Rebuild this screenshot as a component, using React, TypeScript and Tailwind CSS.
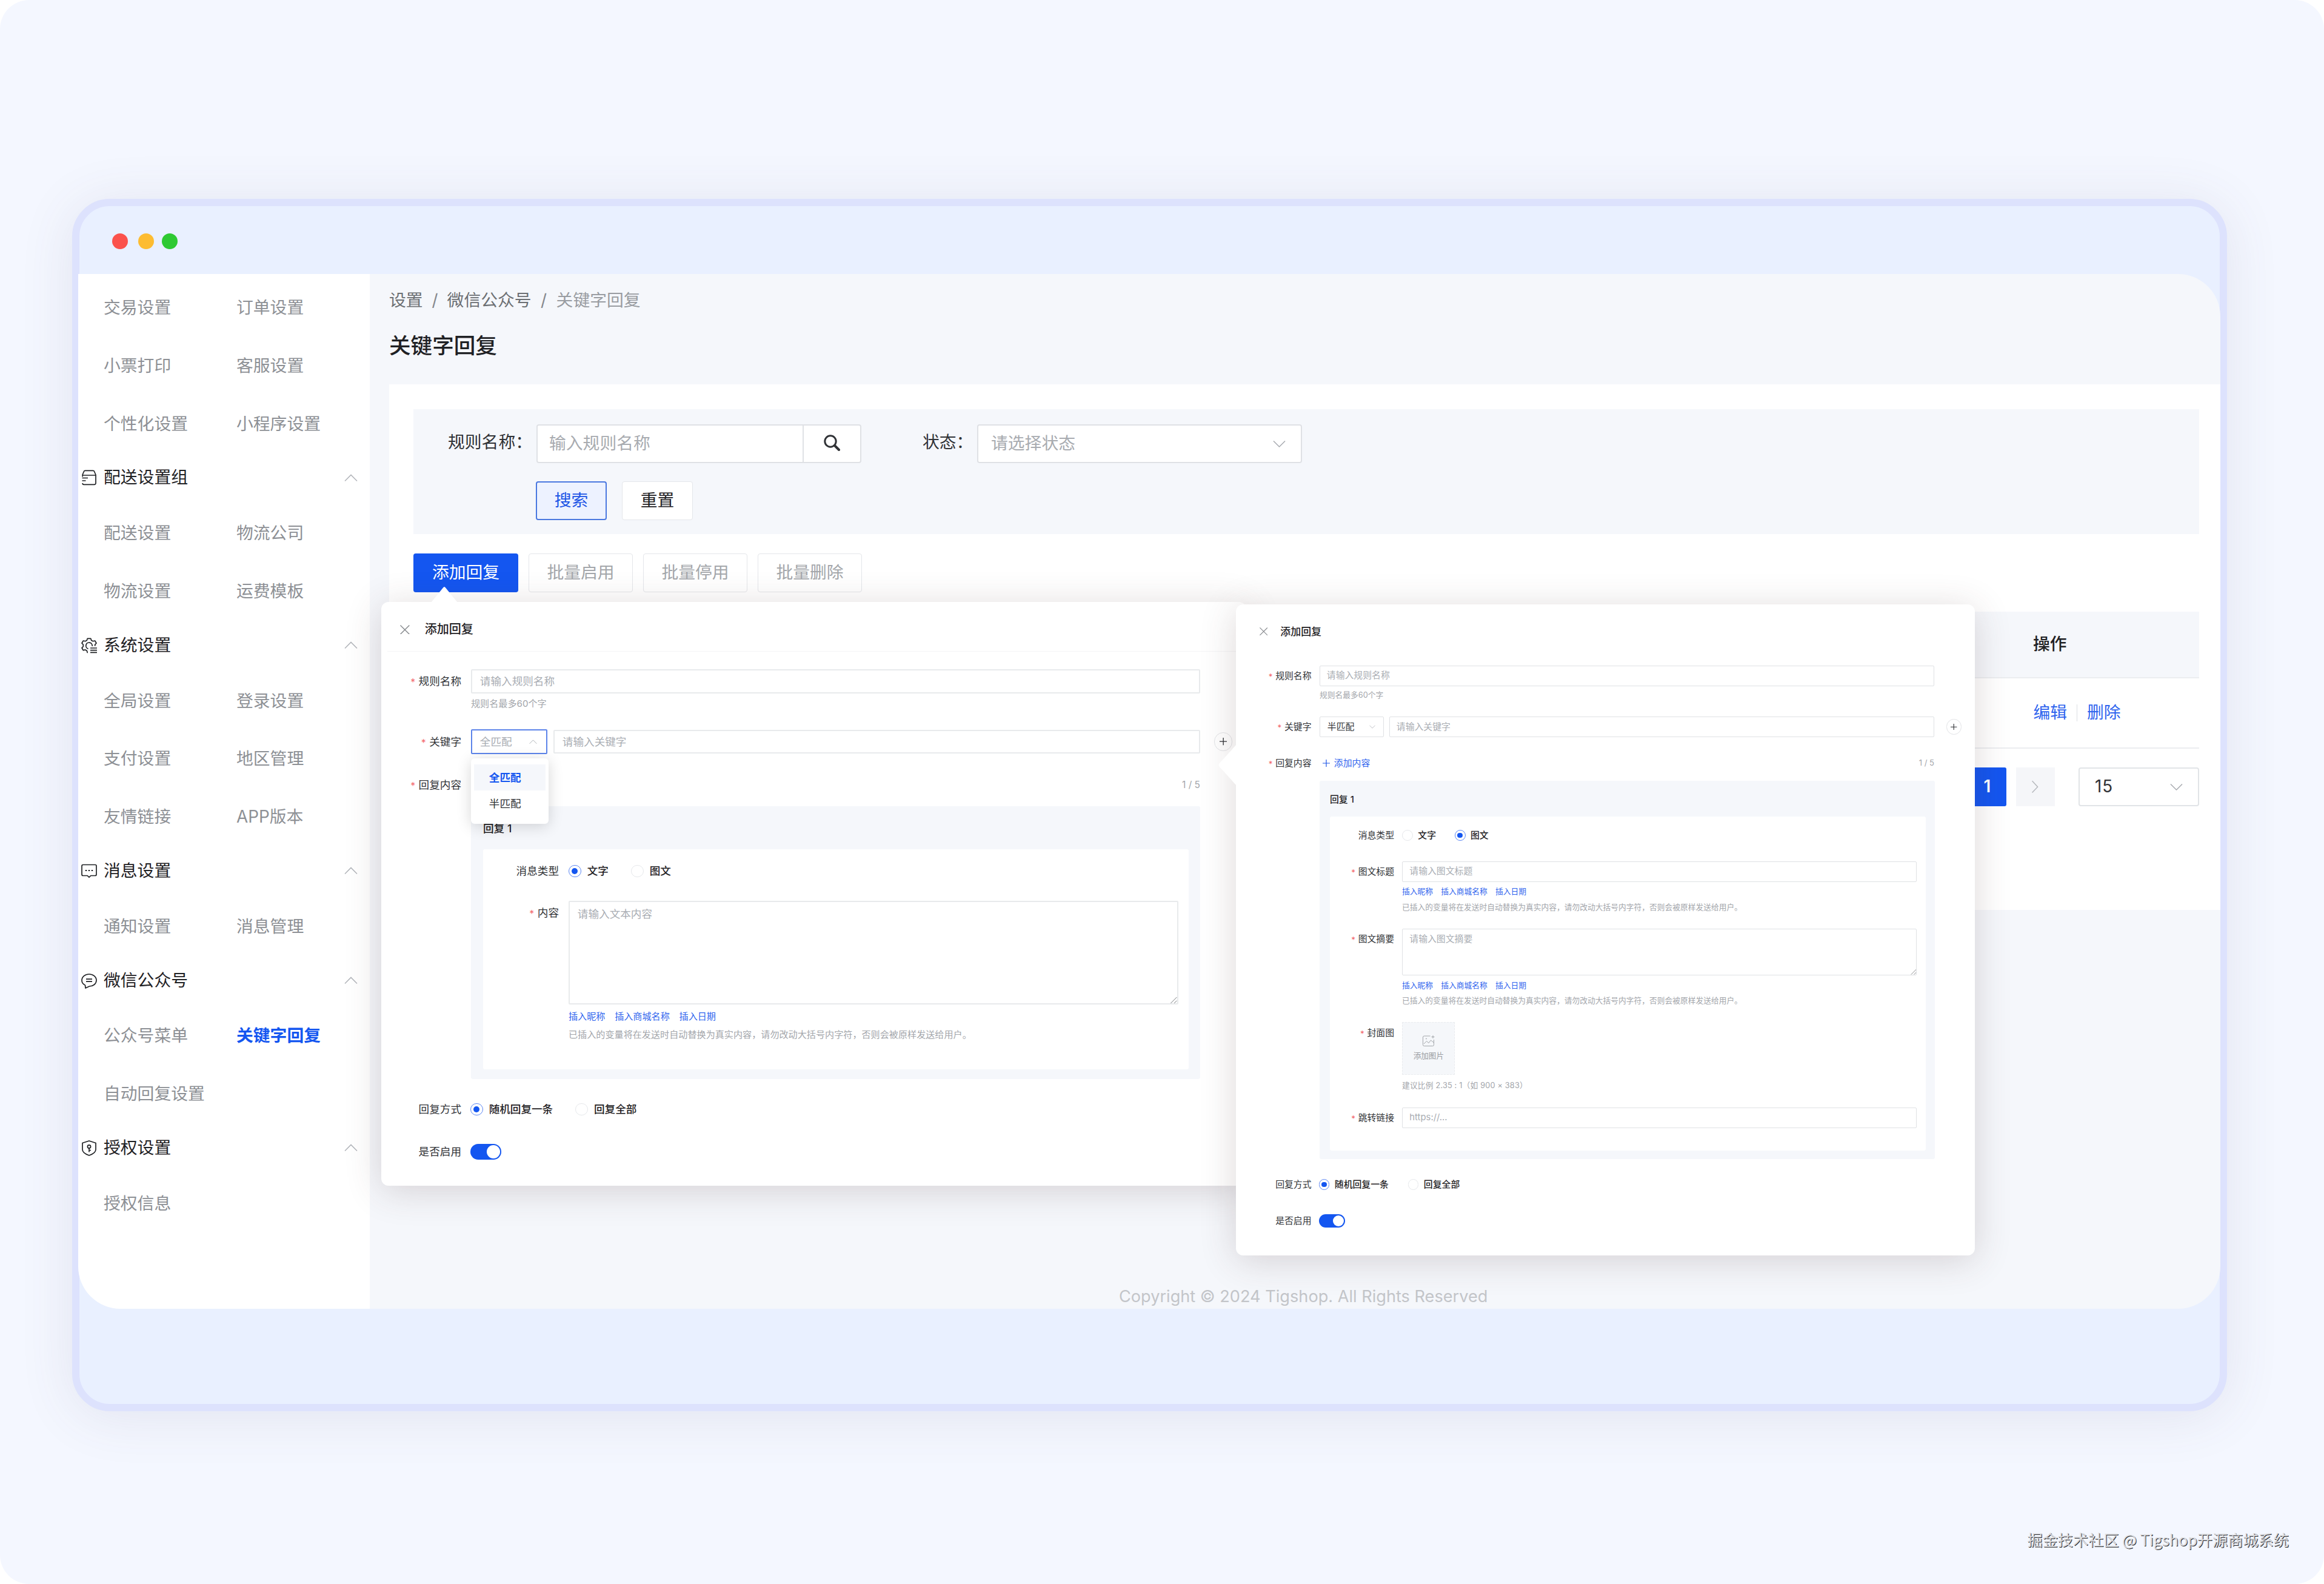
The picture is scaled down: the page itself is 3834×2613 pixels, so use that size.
import type { ReactNode } from 'react';
import clsx from 'clsx';

const menuGroups = [
  { title: '', icon: '', items: ['交易设置', '订单设置', '小票打印', '客服设置', '个性化设置', '小程序设置'] },
  { title: '配送设置组', icon: 'delivery', items: ['配送设置', '物流公司', '物流设置', '运费模板'] },
  { title: '系统设置', icon: 'system', items: ['全局设置', '登录设置', '支付设置', '地区管理', '友情链接', 'APP版本'] },
  { title: '消息设置', icon: 'message', items: ['通知设置', '消息管理'] },
  { title: '微信公众号', icon: 'wechat', items: ['公众号菜单', '关键字回复', '自动回复设置'] },
  { title: '授权设置', icon: 'license', items: ['授权信息'] },
];

const variableLinks = ['插入昵称', '插入商城名称', '插入日期'];
const variableHint = '已插入的变量将在发送时自动替换为真实内容，请勿改动大括号内字符，否则会被原样发送给用户。';

function Chevron({ className, dir = 'down' }: { className?: string; dir?: 'up' | 'down' | 'right' }) {
  const paths = {
    up: 'M1 11.5 11 1.5 21 11.5',
    down: 'M1 1.5 11 11.5 21 1.5',
    right: 'M5 -4 15 6.5 5 17',
  };
  return (
    <svg viewBox="0 0 22 13" fill="none" stroke="currentColor" strokeWidth="1.6" className={clsx('overflow-visible', className)}>
      <path d={paths[dir]} />
    </svg>
  );
}

function MenuIcon({ name }: { name: string }) {
  return (
    <svg viewBox="0 0 26 26" fill="none" stroke="currentColor" strokeWidth="1.7" strokeLinejoin="round" className="h-[26px] w-[26px]">
      {name === 'delivery' && (
        <>
          <path d="M2.2 11.500V8L4.300 3A2.500 2.500 0 0 1 6.600 1.300h12.800A2.500 2.500 0 0 1 21.700 3L24 8.500V22a2.300 2.300 0 0 1-2.300 2.300H4.200a2 2 0 0 1-2-2V22" />
          <path d="M2.2 9H24M1.500 13.500h9.500M1.500 18h6" />
        </>
      )}
      {name === 'system' && (
        <>
          <path d="M11 24.5h-.8l-1-3.2-2.6-1.4-3.2.9-2.4-4 2.3-2.4v-3L1 9l2.4-4 3.2.8 2.6-1.4 1-3h5.6l1 3 2.6 1.4 3.2-.8L25 9l-2.3 2.4v2.3" />
          <path d="M11.5 18.2a5.2 5.2 0 1 1 6.6-4.2M15 17h11M15 20.7h11M15 24.4h11" />
        </>
      )}
      {name === 'message' && (
        <>
          <path d="M3 2.5h20a2 2 0 0 1 2 2v14a2 2 0 0 1-2 2h-7.2L13 23.2l-2.8-2.7H3a2 2 0 0 1-2-2v-14a2 2 0 0 1 2-2z" />
          <path d="M6.8 12h2.4M11.8 12h2.4M16.8 12h2.4" strokeWidth="2.2" />
        </>
      )}
      {name === 'wechat' && (
        <>
          <path d="M6.5 20.2C3 18.500 1 15.500 1 12.200 1 6.500 6.400 2 13 2s12 4.500 12 10.200S19.600 22 13.500 22L7 25z" />
          <path d="M8 10.200h10M8 14.200h10" />
        </>
      )}
      {name === 'license' && (
        <>
          <path d="M13 1 24 4.500v10.800c0 4.600-5 7.700-11 9.700C7 23 2 19.900 2 15.300V4.500z" />
          <circle cx="13" cy="10.500" r="2.600" />
          <path d="M13 13v6.500M13 16.500h3" />
        </>
      )}
    </svg>
  );
}

function Sidebar() {
  return (
    <aside className="w-[481px] shrink-0 bg-white pt-[8.500px] text-[27.8px] leading-none text-[#8d9095]">
      {menuGroups.map((group, index) => (
        <div key={index}>
          {group.title && (
            <div className="flex h-[85.2px] items-center pb-[3px] pl-[5px] pr-[20px] text-[#1f2124]">
              <MenuIcon name={group.icon} />
              <span className="ml-[11px] flex-1">{group.title}</span>
              <Chevron dir="up" className="w-[22px] text-[#b4b7bc]" />
            </div>
          )}
          <ul className="grid grid-cols-[219px_219px] pl-[42px]">
            {group.items.map((item) => (
              <li
                key={item}
                className={clsx('flex h-[95.6px] items-center', item === '关键字回复' && 'font-bold text-[#1456f0]')}
              >
                {item}
              </li>
            ))}
          </ul>
        </div>
      ))}
    </aside>
  );
}

function Button({ children, variant = 'default' }: { children: ReactNode; variant?: 'default' | 'primary' | 'plain' | 'disabled' }) {
  return (
    <button
      className={clsx(
        'flex h-[64px] items-center justify-center rounded-[4px]',
        variant === 'default' && 'w-[117px] border border-[#e4e6ea] bg-white text-[#1f2124]',
        variant === 'plain' && 'w-[117px] border-2 border-[#4a78e0] bg-[#edf2ff] text-[#1d55e6]',
        variant === 'primary' && 'w-[173px] bg-[#1456f0] text-white',
        variant === 'disabled' && 'w-[172px] border border-[#e4e6ea] bg-white text-[#a4a7ab]',
      )}
    >
      {children}
    </button>
  );
}

function SearchPanel() {
  return (
    <div className="h-[206px] w-[2946px] bg-[#f5f7fb] pt-[25px] text-[#303236]">
      <div className="flex h-[64px]">
        <span className="flex h-[60px] w-[203px] items-center pl-[57px]">规则名称：</span>
        <div className="flex w-[536px] rounded-[4px] border-2 border-[#dfe1e5] bg-white">
          <span className="flex flex-1 items-center pl-[19px] text-[#a8abb0]">输入规则名称</span>
          <span className="flex w-[95px] items-center justify-center border-l-2 border-[#dfe1e5] pb-[3px] pr-px">
            <svg viewBox="0 0 27 27" fill="none" stroke="currentColor" className="h-[27px] w-[27px]">
              <circle cx="11" cy="11" r="9.200" strokeWidth="3" />
              <path d="m18 18 7 7" strokeWidth="4" strokeLinecap="round" />
            </svg>
          </span>
        </div>
        <span className="flex h-[60px] w-[192px] items-center pl-[101px]">状态：</span>
        <div className="-ml-px flex w-[536px] items-center rounded-[4px] border-2 border-[#dfe1e5] bg-white pl-[21px] pr-[25px]">
          <span className="flex-1 text-[#a8abb0]">请选择状态</span>
          <Chevron className="w-[21px] text-[#a8abb0]" />
        </div>
      </div>
      <div className="mt-[30px] flex gap-[25px] pl-[202px]">
        <Button variant="plain">搜索</Button>
        <Button>重置</Button>
      </div>
    </div>
  );
}

function ListPage() {
  return (
    <main className="flex flex-1 flex-col bg-[#f5f7fb] pl-[32px] text-[27.8px] leading-none">
      <nav className="flex h-[87px] items-center text-[#6c6f73]">
        <span>设置</span>
        <span className="w-[40px] text-center text-[#85888d]">/</span>
        <span>微信公众号</span>
        <span className="w-[41px] text-center text-[#85888d]">/</span>
        <span className="text-[#999ca1]">关键字回复</span>
      </nav>
      <h1 className="flex h-[95px] items-start pt-[14px] text-[35.600px] font-medium text-[#1f2124]">关键字回复</h1>
      <section className="h-[867px] bg-white pl-[40px] pt-[41px]">
        <SearchPanel />
        <div className="mt-[32px] flex gap-[17px]">
          <Button variant="primary">添加回复</Button>
          <Button variant="disabled">批量启用</Button>
          <Button variant="disabled">批量停用</Button>
          <Button variant="disabled">批量删除</Button>
        </div>
        <div className="mt-[32px] w-[2946px]">
          <div className="flex h-[110px] items-center justify-end border-b-2 border-[#ebedf0] bg-[#f5f7fb] font-medium text-[#1f2124]">
            <span className="w-[274px]">操作</span>
          </div>
          <div className="flex h-[116px] items-center justify-end border-b-2 border-[#ebedf0] text-[#2f64ee]">
            <span>编辑</span>
            <span className="mx-[16px] h-[28px] w-px bg-[#dcdfe3]" />
            <span className="w-[185px]">删除</span>
          </div>
          <div className="mt-[31px] flex justify-end">
            <span className="flex h-[64px] w-[63px] items-center justify-center rounded-[3px] bg-[#1456f0] font-semibold text-white">1</span>
            <span className="ml-[16px] flex h-[64px] w-[64px] items-center justify-center bg-[#f5f6f9]">
              <Chevron dir="right" className="w-[20px] text-[#b4b7bc]" />
            </span>
            <span className="ml-[39px] flex h-[64px] w-[199px] items-center rounded-[4px] border-2 border-[#e1e4e7] pl-[25px] pr-[25px] text-[#303236]">
              <span className="flex-1 tracking-[1px]">15</span>
              <Chevron className="w-[21px] text-[#a8abb0]" />
            </span>
          </div>
        </div>
      </section>
      <footer className="mt-auto w-[3021px] pb-[7px] pl-[1204px] text-left text-[27.150px] text-[#c3c5c9]">
        Copyright © 2024 Tigshop. All Rights Reserved
      </footer>
    </main>
  );
}

/* Form controls below size themselves in em, from the font size of the dialog */

function Label({ children, required, className }: { children: ReactNode; required?: boolean; className?: string }) {
  return (
    <span className={clsx('mr-[0.9em] flex h-full max-h-[2.28em] shrink-0 items-center justify-end text-[#303236]', className)}>
      {required && <span className="mr-[0.350em] mt-[0.250em] text-[0.900em] text-[#f3666b]">*</span>}
      {children}
    </span>
  );
}

function Input({ placeholder, className }: { placeholder: string; className?: string }) {
  return (
    <div className={clsx('flex h-[2.27em] items-center rounded-[2px] border-[#dfe1e4] bg-white pl-[0.740em] text-[#a9adb3]', className)}>
      {placeholder}
    </div>
  );
}

function TextArea({ placeholder, className }: { placeholder: string; className?: string }) {
  return (
    <div className={clsx('flex items-end justify-end rounded-[2px] border-[#dfe1e4] bg-white pl-[0.740em] text-[#a9adb3]', className)}>
      <span className="flex h-[2.200em] flex-1 items-center self-start">{placeholder}</span>
      <svg viewBox="0 0 12 12" fill="none" stroke="#6f7276" strokeWidth="1" className="h-[0.650em] w-[0.650em]">
        <path d="M1 12 12 1M7 12l5-5" />
      </svg>
    </div>
  );
}

function Radio({ children, checked, className }: { children: ReactNode; checked?: boolean; className?: string }) {
  return (
    <span className={clsx('flex items-center text-[#1f2124]', className)}>
      <span
        className={clsx(
          'mr-[0.570em] flex h-[1.180em] w-[1.180em] items-center justify-center rounded-full border',
          checked ? 'border-[#5b86f3]' : 'border-[#e6e8eb]',
        )}
      >
        {checked && <span className="h-[0.580em] w-[0.580em] rounded-full bg-[#1456f0]" />}
      </span>
      <span className="font-medium">{children}</span>
    </span>
  );
}

function Switch() {
  return (
    <span className="-ml-px flex h-[1.460em] w-[2.880em] items-center justify-end rounded-full bg-[#1456f0] pr-[0.080em]">
      <span className="h-[1.250em] w-[1.250em] rounded-full bg-white" />
    </span>
  );
}

function AddButton({ className }: { className?: string }) {
  return (
    <span className={clsx('flex h-[1.720em] w-[1.720em] items-center justify-center rounded-full border border-[#e2e3e6]', className)}>
      <svg viewBox="0 0 12 12" stroke="#303236" strokeWidth="1.300" className="h-[0.700em] w-[0.700em]">
        <path d="M6 0v12M0 6h12" />
      </svg>
    </span>
  );
}

function VariableLinks({ className }: { className?: string }) {
  return (
    <div className={clsx('flex items-center gap-[1.040em] text-[0.859em] text-[#2f64ee]', className)}>
      {variableLinks.map((link) => (
        <span key={link}>{link}</span>
      ))}
    </div>
  );
}

function Hint({ children, className }: { children: ReactNode; className?: string }) {
  return <p className={clsx('flex items-center whitespace-nowrap text-[0.859em] text-[#a3a6ab]', className)}>{children}</p>;
}

function DialogTitle({ className }: { className?: string }) {
  return (
    <header className={clsx('flex items-center pt-[10px]', className)}>
      <svg viewBox="0 0 16 16" stroke="#85888c" strokeWidth="1.400" className="h-[0.900em] w-[0.900em]">
        <path d="M0.500 0.500l15 15M15.500 0.500l-15 15" />
      </svg>
      <h2 className="ml-[1.240em] text-[1.140em] font-medium text-[#1f2124]">添加回复</h2>
    </header>
  );
}

function MatchDropdown() {
  return (
    <ul className="absolute left-0 top-[48px] z-10 h-[108px] w-[128px] rounded-[6px] bg-white px-[5px] pt-[10px] shadow-[0_4px_24px_rgba(0,0,0,0.16)]">
      <li className="flex h-[43px] items-center bg-[#f5f7fb] pl-[25px] font-bold text-[#1456f0]">全匹配</li>
      <li className="flex h-[43px] items-center pl-[25px] text-[#303236]">半匹配</li>
    </ul>
  );
}

function TextReplyDialog() {
  return (
    <div className="absolute left-[629px] top-[993px] h-[963px] w-[1427px] rounded-[12px] bg-white text-[17.600px] leading-none shadow-[0_8px_60px_rgba(75,50,50,0.190)]">
      <svg viewBox="0 0 44 27" className="absolute left-[82px] top-[-26px] h-[27px] w-[44px] fill-white">
        <path d="M0 27 20 2.500Q22 -.5 24 2.500L44 27z" />
      </svg>
      <DialogTitle className="ml-[10px] h-[82px] border-b border-[#f5f5f6] pl-[21px]" />
      <div className="mt-[29px] flex h-[40px]">
        <Label required className="w-[132px]">规则名称</Label>
        <Input placeholder="请输入规则名称" className="w-[1203px] border-2 border-[#e8eaec]" />
      </div>
      <Hint className="ml-[148px] mt-[7px] h-[20px]">规则名最多60个字</Hint>
      <div className="mt-[32px] flex h-[41px] items-center">
        <Label required className="w-[132px]">关键字</Label>
        <div className="relative">
          <div className="flex h-[41px] w-[126px] items-center justify-between rounded-[2px] border-2 border-[#5c84ea] pl-[13px] pr-[15px] text-[#a9adb3]">
            全匹配
            <Chevron dir="up" className="w-[13px]" />
          </div>
          <MatchDropdown />
        </div>
        <Input placeholder="请输入关键字" className="ml-[10px] w-[1067px] border-2 border-[#e8eaec]" />
        <AddButton className="ml-[23px]" />
      </div>
      <div className="mt-[41px] flex h-[20px] items-center">
        <Label required className="w-[132px]">回复内容</Label>
        <span className="ml-auto mr-[76px] text-[0.880em] text-[#a3a6ab]">1 / 5</span>
      </div>
      <div className="ml-[148px] mt-[25px] h-[450px] w-[1203px] rounded-[3px] bg-[#f5f7fb] pl-[20px]">
        <h3 className="flex h-[71px] items-center pt-[3px] font-medium text-[#1f2124]">回复 1</h3>
        <div className="h-[363px] w-[1164px] rounded-[3px] bg-white pt-[25px]">
          <div className="flex h-[22px] items-center">
            <Label className="w-[125px]">消息类型</Label>
            <Radio checked>文字</Radio>
            <Radio className="ml-[37px]">图文</Radio>
          </div>
          <div className="mt-[38px] flex h-[171px]">
            <Label required className="w-[125px]">内容</Label>
            <TextArea placeholder="请输入文本内容" className="w-[1006px] border-2 border-[#e8eaec]" />
          </div>
          <VariableLinks className="ml-[141px] mt-[10px] h-[20px]" />
          <Hint className="ml-[141px] mt-[10px] h-[20px]">{variableHint}</Hint>
        </div>
      </div>
      <div className="mt-[39px] flex h-[22px] items-center">
        <Label className="w-[132px]">回复方式</Label>
        <Radio checked className="-ml-px">随机回复一条</Radio>
        <Radio className="ml-[37px]">回复全部</Radio>
      </div>
      <div className="mt-[46px] flex h-[26px] items-center">
        <Label className="w-[132px]">是否启用</Label>
        <Switch />
      </div>
    </div>
  );
}

function NewsReplyDialog() {
  return (
    <div className="absolute left-[2039px] top-[997px] h-[1074px] w-[1219px] rounded-[12px] bg-white text-[14.850px] leading-none shadow-[0_8px_60px_rgba(75,50,50,0.190)]">
      <svg viewBox="0 0 30 68" className="absolute left-[-29px] top-[231px] h-[68px] w-[30px] fill-white">
        <path d="M30 0 1.500 31.500Q-.5 34 1.500 36.500L30 68z" />
      </svg>
      <DialogTitle className="h-[80px] pl-[39px]" />
      <div className="mt-[21px] flex h-[34px]">
        <Label required className="w-[124.500px]">规则名称</Label>
        <Input placeholder="请输入规则名称" className="w-[1014px] border" />
      </div>
      <Hint className="ml-[138px] mt-[6px] h-[18px]">规则名最多60个字</Hint>
      <div className="mt-[26px] flex h-[34px] items-center">
        <Label required className="w-[124.500px]">关键字</Label>
        <div className="flex h-[34px] w-[106px] items-center justify-between rounded-[2px] border border-[#dfe1e4] pl-[12px] pr-[13px] text-[#303236]">
          半匹配
          <Chevron className="w-[10px] text-[#a9adb3]" />
        </div>
        <Input placeholder="请输入关键字" className="ml-[9px] w-[899px] border" />
        <AddButton className="ml-[20px]" />
      </div>
      <div className="mt-[33px] flex h-[20px] items-center">
        <Label required className="w-[124.500px]">回复内容</Label>
        <svg viewBox="0 0 12 12" stroke="#1d55e6" strokeWidth="1.200" className="ml-[5px] h-[12px] w-[12px]">
          <path d="M6 0v12M0 6h12" />
        </svg>
        <span className="ml-[7px] text-[#2f64ee]">添加内容</span>
        <span className="ml-auto mr-[67px] text-[0.880em] text-[#a3a6ab]">1 / 5</span>
      </div>
      <div className="ml-[138px] mt-[19px] h-[624px] w-[1015px] rounded-[3px] bg-[#f5f7fb] pl-[17px]">
        <h3 className="flex h-[59px] items-center pt-[3px] font-medium text-[#1f2124]">回复 1</h3>
        <div className="h-[551px] w-[983px] rounded-[3px] bg-white pt-[22px]">
          <div className="flex h-[18px] items-center">
            <Label className="w-[106px]">消息类型</Label>
            <Radio>文字</Radio>
            <Radio checked className="ml-[31px]">图文</Radio>
          </div>
          <div className="mt-[34px] flex h-[34px]">
            <Label required className="w-[106px]">图文标题</Label>
            <Input placeholder="请输入图文标题" className="w-[849px] border" />
          </div>
          <VariableLinks className="ml-[119px] mt-[7px] h-[18px]" />
          <Hint className="ml-[119px] mt-[8px] h-[18px]">{variableHint}</Hint>
          <div className="mt-[26px] flex h-[77px]">
            <Label required className="w-[106px]">图文摘要</Label>
            <TextArea placeholder="请输入图文摘要" className="w-[849px] border" />
          </div>
          <VariableLinks className="ml-[119px] mt-[8px] h-[18px]" />
          <Hint className="ml-[119px] mt-[7px] h-[18px]">{variableHint}</Hint>
          <div className="mt-[26px] flex h-[87px]">
            <Label required className="w-[106px] pt-[2px]">封面图</Label>
            <div className="flex w-[87px] flex-col items-center border border-dashed border-[#e9ebee] bg-[#f5f7fa] pt-[21px] text-[#9a9da2]">
              <svg viewBox="0 0 20 18" fill="none" stroke="currentColor" strokeWidth="0.900" className="h-[18px] w-[20px]">
                <path d="M12.500 1H2.500A2 2 0 0 0 .5 3v12.500a2 2 0 0 0 2 2h14a2 2 0 0 0 2-2V7M17 0v5M14.500 2.500h5M2 14l4.500-4.500 3.500 3L13.500 8l5 4" />
                <circle cx="6" cy="5.500" r=".6" />
              </svg>
              <span className="mt-[10px] text-[0.850em]">添加图片</span>
            </div>
          </div>
          <Hint className="ml-[119px] mt-[9px] h-[18px] tracking-[0.170px]">建议比例 2.35 : 1（如 900 × 383）</Hint>
          <div className="mt-[27px] flex h-[34px]">
            <Label required className="w-[106px]">跳转链接</Label>
            <Input placeholder="https://..." className="w-[849px] border" />
          </div>
        </div>
      </div>
      <div className="mt-[33px] flex h-[18px] items-center">
        <Label className="w-[124.500px]">回复方式</Label>
        <Radio checked className="-ml-px">随机回复一条</Radio>
        <Radio className="ml-[32px]">回复全部</Radio>
      </div>
      <div className="mt-[40px] flex h-[22px] items-center">
        <Label className="w-[124.500px]">是否启用</Label>
        <Switch />
      </div>
    </div>
  );
}

export default function App() {
  return (
    <div className="relative flex h-[2613px] w-[3834px] flex-col rounded-[48px] bg-[#f4f7ff] pl-[119px] pt-[328px] font-[Inter,'Noto_Sans_CJK_SC',sans-serif]">
      <div className="h-[2000px] w-[3555px] rounded-[62px] border-[12px] border-[#dde2fd] bg-[#e9f0ff] shadow-[0_8px_90px_rgba(80,70,110,0.110)]">
        <div className="flex h-[112px] items-center pb-[1px] pl-[54px] pt-[5px]">
          <span className="h-[26px] w-[26px] rounded-full bg-[#fb524c]" />
          <span className="ml-[17px] h-[26px] w-[26px] rounded-full bg-[#fdbc31]" />
          <span className="ml-[13px] h-[26px] w-[26px] rounded-full bg-[#2ec932]" />
        </div>
        <div className="-ml-[2px] -mr-px flex h-[1707px] overflow-hidden rounded-b-[70px] rounded-tr-[70px]">
          <Sidebar />
          <ListPage />
        </div>
      </div>

      <TextReplyDialog />
      <NewsReplyDialog />

      <p className="mr-[58px] mt-[196px] self-end text-[25.200px] leading-[30px] text-[#dcdde0] font-['Noto_Sans_CJK_SC',sans-serif] [text-shadow:1px_1px_0_#2a2a2c]">
        掘金技术社区 @ Tigshop开源商城系统
      </p>
    </div>
  );
}
